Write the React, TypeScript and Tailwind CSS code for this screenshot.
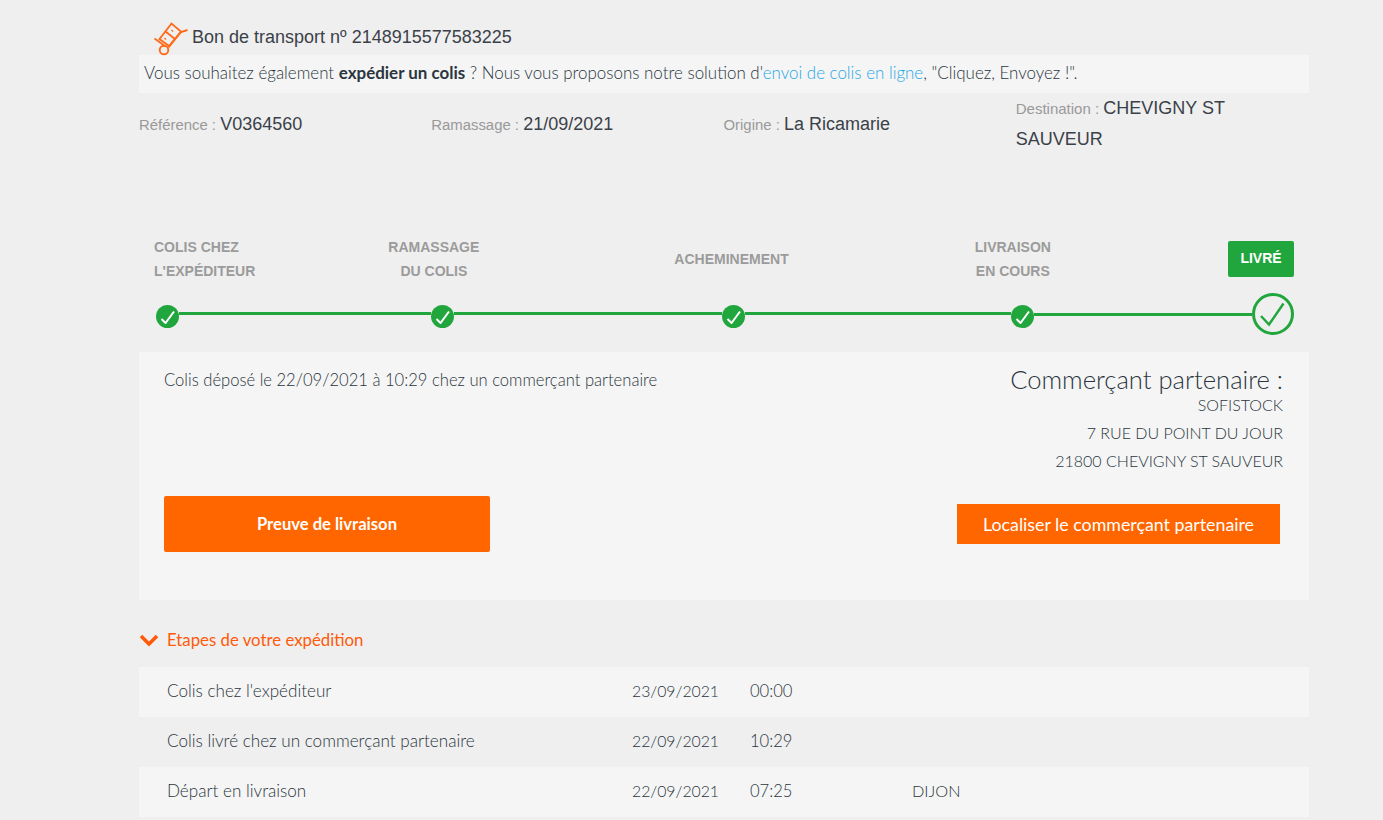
import React from "react";

const lato = "font-['Lato','Open_Sans',sans-serif]";
const arial = "font-['Liberation_Sans',Arial,sans-serif]";

function Dolly() {
  return (
    <svg width="45" height="40" viewBox="0 0 45 40" fill="none" stroke="#ff6b1a" strokeWidth="1.9" className="block shrink-0">
      <path d="M37.5 12 L31 14 L18.5 29.5" />
      <path d="M4.5 20.5 L15.5 28.5" />
      <path d="M9.5 21 L21.5 5.5 L31 13.5 L19 28 Z" />
      <path d="M15.5 13.5 L25 21" />
      <path d="M14.5 20 L16 21.5 M21.5 12 L23 13.5" strokeWidth="1.3" />
      <circle cx="14" cy="32" r="4.3" />
    </svg>
  );
}

function SmallCheck() {
  return (
    <span className="mt-[12px] flex h-[23px] w-[23px] shrink-0 items-center justify-center rounded-full bg-[#21a63d]">
      <svg width="15" height="14" viewBox="0 0 15 14" fill="none" stroke="#fff" strokeWidth="2">
        <path d="M1.5 9 L5.5 13 L14 1.5" />
      </svg>
    </span>
  );
}

function Step({ a, b, left }: { a: string; b?: string; left?: boolean }) {
  return (
    <div className={`${arial} ${left ? "text-left" : "text-center"} whitespace-nowrap text-[14px] font-bold leading-[24px] text-[#9b9b9b]`}>
      <div>{a}</div>
      {b && <div>{b}</div>}
    </div>
  );
}

function Row({ a, d, t, c, odd }: { a: string; d: string; t: string; c?: string; odd?: boolean }) {
  return (
    <div className={`flex h-[50px] items-center pb-[2px] pl-[28px] text-[#2a3540] ${odd ? "bg-[#f5f5f5]" : ""}`}>
      <div className="w-[465px] text-[17.1px]">{a}</div>
      <div className="w-[118px] text-[15.8px]">{d}</div>
      <div className="w-[162px] text-[16.6px]">{t}</div>
      <div className="text-[16.3px]">{c}</div>
    </div>
  );
}

function Detail({ label, value }: { label: string; value: string }) {
  return (
    <div className="mt-[18px] w-[292.25px] text-[18px] text-[#3a4149]">
      <span className="text-[14.9px] text-[#999]">{label} : </span>
      {value}
    </div>
  );
}

export default function App() {
  return (
    <div className={`${lato} h-[820px] w-[1383px] overflow-hidden bg-[#efefef] font-light`}>
      <div className="ml-[139px] w-[1170px]">
        <div className={`${arial} flex h-[55px] items-start pl-[11px] pt-[18px] font-normal`}>
          <Dolly />
          <span className="-ml-[3px] mt-[7px] text-[18px] leading-[24px] text-[#3a4149]">Bon de transport nº 2148915577583225</span>
        </div>
        <div className="flex h-[38px] items-center bg-[#f5f5f5] pb-[2px] pl-[5px] text-[16.95px] text-[#2a3540]">
          <span>
            Vous souhaitez également <b className="font-bold">expédier un colis</b> ? Nous vous proposons notre solution d'
            <span className="text-[#1fa8e6]">envoi de colis en ligne</span>, "Cliquez, Envoyez !".
          </span>
        </div>
        <div className={`${arial} flex h-[85px] font-normal`}>
          <Detail label="Référence" value="V0364560" />
          <Detail label="Ramassage" value="21/09/2021" />
          <Detail label="Origine" value="La Ricamarie" />
          <div className="w-[292.25px] text-[18px] leading-[30px] text-[#3a4149]">
            <span className="text-[15px] text-[#999]">Destination : </span>CHEVIGNY ST SAUVEUR
          </div>
        </div>

        <div className="mt-[51px] flex h-[59px] items-center px-[15px]">
          <Step left a="COLIS CHEZ" b="L'EXPÉDITEUR" />
          <div className="ml-[133px]"><Step a="RAMASSAGE" b="DU COLIS" /></div>
          <div className="ml-[195px]"><Step a="ACHEMINEMENT" /></div>
          <div className="ml-[186px]"><Step a="LIVRAISON" b="EN COURS" /></div>
          <div className={`${arial} ml-auto flex h-[36px] w-[66px] items-center justify-center rounded-[2px] bg-[#21a63d] text-[14px] font-bold text-white`}>LIVRÉ</div>
        </div>

        <div className="mt-[5px] flex h-[42px] items-start pl-[17px] pr-[15px]">
          <SmallCheck />
          <div className="mt-[19px] h-[3px] w-[252px] bg-[#21a63d]" />
          <SmallCheck />
          <div className="mt-[19px] h-[3px] w-[268px] bg-[#21a63d]" />
          <SmallCheck />
          <div className="mt-[19px] h-[3px] w-[266px] bg-[#21a63d]" />
          <SmallCheck />
          <div className="mt-[20px] h-[3px] flex-1 bg-[#21a63d]" />
          <span className="flex h-[42px] w-[42px] shrink-0 items-center justify-center rounded-full border-[3px] border-[#21a63d]">
            <svg width="26" height="26" viewBox="0 0 26 26" fill="none" stroke="#21a63d" strokeWidth="2.4">
              <path d="M1 15 L9 23.5 L23.5 2.5" />
            </svg>
          </span>
        </div>

        <div className="mt-[17px] h-[248px] bg-[#f5f5f5] pl-[25px] pr-[26px] pt-[15px] text-[#2a3540]">
          <div className="flex h-[129px] justify-between">
            <div className="pt-[2px] text-[16.6px] leading-[22px]">Colis déposé le 22/09/2021 à 10:29 chez un commerçant partenaire</div>
            <div className="text-right text-[16px] leading-[28px]">
              <div className="text-[25.6px] leading-[24px]">Commerçant partenaire :</div>
              <div>SOFISTOCK</div>
              <div>7 RUE DU POINT DU JOUR</div>
              <div>21800 CHEVIGNY ST SAUVEUR</div>
            </div>
          </div>
          <div className="flex items-start justify-between">
            <div className="flex h-[56px] w-[326px] items-center justify-center rounded-[2px] bg-[#ff6600] text-[16.6px] font-bold text-white">Preuve de livraison</div>
            <div className="mr-[3px] mt-[8px] flex h-[40px] w-[323px] items-center justify-center bg-[#ff6600] text-[17.8px] font-normal text-white">Localiser le commerçant partenaire</div>
          </div>
        </div>

        <div className="flex h-[67px] items-center gap-[8px] pt-[13px] text-[16.8px] font-normal text-[#ff5a0a]">
          <svg width="20" height="13" viewBox="0 0 20 13" fill="none" stroke="#ff5a0a" strokeWidth="3.6"><path d="M2 2 L10 10 L18 2" /></svg>
          <span>Etapes de votre expédition</span>
        </div>
        <Row odd a="Colis chez l'expéditeur" d="23/09/2021" t="00:00" />
        <Row a="Colis livré chez un commerçant partenaire" d="22/09/2021" t="10:29" />
        <Row odd a="Départ en livraison" d="22/09/2021" t="07:25" c="DIJON" />
      </div>
    </div>
  );
}
